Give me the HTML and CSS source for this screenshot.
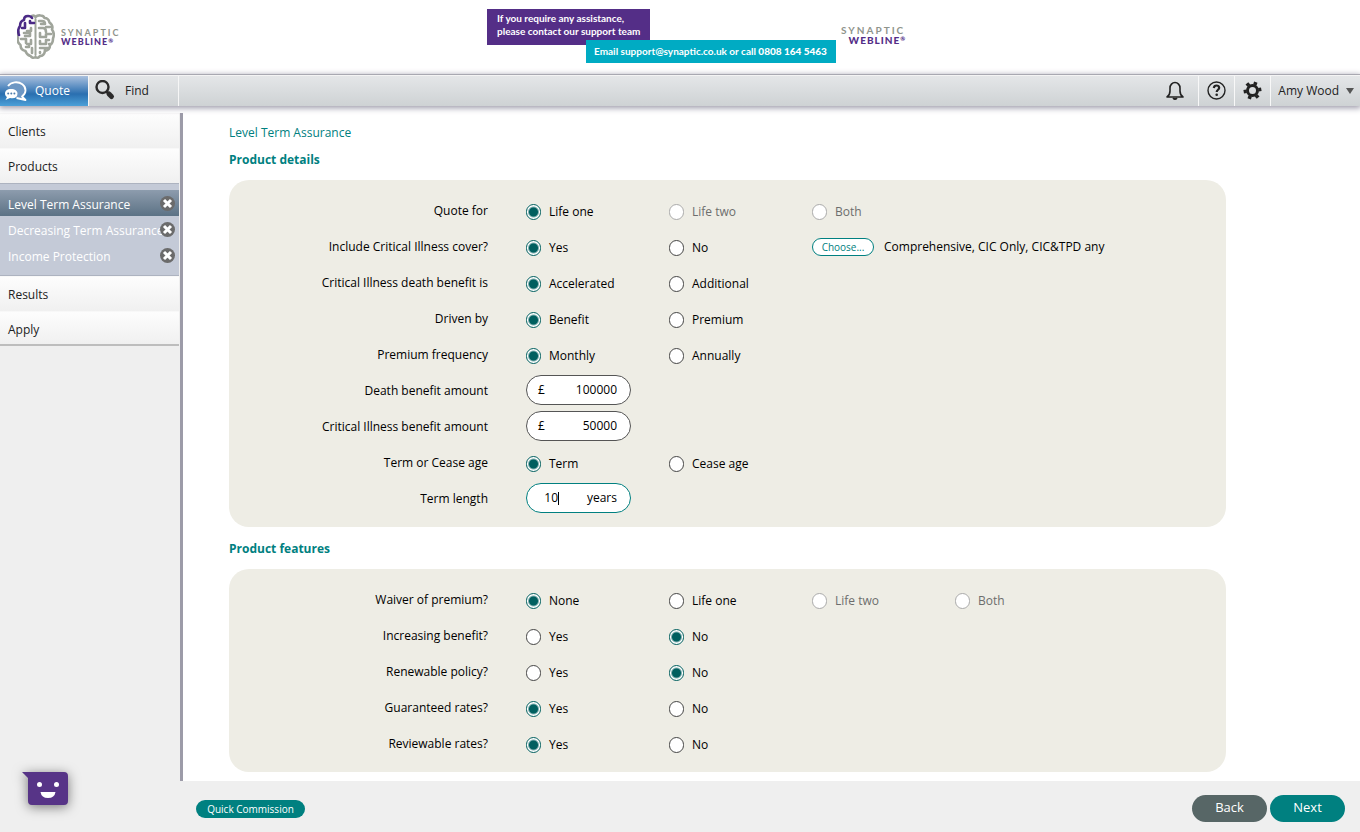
FILE: index.html
```html
<!DOCTYPE html>
<html lang="en">

<head>
    <meta charset="UTF-8">
    <meta name="viewport" content="width=device-width, initial-scale=1.0">
    <title>Synaptic Webline - Level Term Assurance</title>
    <link rel="stylesheet" href="styles.css">
</head>

<body>
    <header class="header">
        <a class="logo" href="#">
            <svg class="brain" width="38" height="46" viewBox="0 0 38 46" fill="none" stroke="#a0a59b" stroke-width="2.600" stroke-linecap="round" stroke-linejoin="round">
                <path d="M18.500 5v36" stroke-width="2" />
                <path d="M15 2q2-1 3.500 1q2-2 5-1.500q3 0 4 2.500q4 0 5 4.500q4 3 2.500 7q3 4 1 9q0 5-3 6.500q0 5-5 6q-1 5-5 5q-2 3-4.500 1q-3 2-5-1q-4-1-5-5q-5-1-5-6q-4-3-2.500-7q-2-3 .5-6" />
                <path d="M22 7h3q3 0 3 3h-4M22 14h4q3 0 3 4M33 13h-4M34 20h-5v3h-6v-4M32 26h-3v4h-6v-3M23 34h5v3M23 39v-1M29 34h2" />
                <path d="M14 14v3h-4M7 19h6v3h-5M4 25h5v4M14 26v4h-4M9 33h3v-1M15 34v5M33 30h-1" />
                <path stroke="#4b2a86" d="M17 9h-4v-2M15 4q-1-2-4-2q-4 0-4 4q-4 1-4 6q-3 4-1 9M8 9v5h-3" />
            </svg>
            <span class="logoText"><span>SYNAPTIC</span><strong>WEBLINE<small>®</small></strong></span>
        </a>
        <div class="support">
            <p class="supportTitle">If you require any assistance,<br>please contact our support team</p>
            <p class="supportContact">Email support@synaptic.co.uk or call <b>0808 164 5463</b></p>
        </div>
        <span class="logoText logoTextRight"><span>SYNAPTIC</span><strong>WEBLINE<small>®</small></strong></span>
    </header>

    <nav class="navBar">
        <a class="tab tabActive" href="#">
            <svg width="24" height="22" viewBox="0 0 24 22">
                <path d="M4 6a9.500 8 0 1 1 14 10.500l3.500 3.500-9-2" fill="#6d97c4" stroke="#fff" stroke-width="1.800" stroke-linejoin="round" />
                <path d="M7 9c-4 0-6 2-6 4.500 0 2 1 3 2 3.500l-1.500 3 4.500-2c5 1 7.500-1 7.500-4.500C13.500 11 11 9 7 9z" fill="#fff" />
                <g fill="#4d7cac"><circle cx="4.200" cy="13.500" r="1" /><circle cx="7.300" cy="13.500" r="1" /><circle cx="10.400" cy="13.500" r="1" /></g>
            </svg>
            Quote
        </a>
        <a class="tab tabFind" href="#">
            <svg width="22" height="22" viewBox="0 0 22 22" fill="none" stroke="#2b2b2b">
                <circle cx="7.500" cy="7" r="6" stroke-width="2.400" />
                <path d="M11.500 11.500l2 2" stroke-width="2.500" />
                <path d="M14 14l2.500 2.500" stroke-width="5" stroke-linecap="round" />
            </svg>
            Find
        </a>
        <div class="navTools">
            <button class="tool toolBell" type="button" aria-label="Notifications">
                <svg width="20" height="20" viewBox="0 0 20 20" fill="none" stroke="#222" stroke-width="1.600" stroke-linejoin="round">
                    <path d="M2 16q3-2 3-6V7a5 5.500 0 0 1 10 0v3q0 4 3 6z" />
                    <path d="M8 17q2 2.500 4 0" fill="#222" />
                </svg>
            </button>
            <button class="tool" type="button" aria-label="Help">
                <svg width="20" height="20" viewBox="0 0 20 20" fill="none" stroke="#222">
                    <circle cx="9.500" cy="9.500" r="8.500" stroke-width="1.400" />
                    <path d="M6.800 7q.3-2.500 2.700-2.500t2.700 2.300c0 2-2.500 2-2.500 4.300" stroke-width="2.200" />
                    <circle cx="9.700" cy="13.800" r="1.300" fill="#222" stroke="none" />
                </svg>
            </button>
            <button class="tool" type="button" aria-label="Settings">
                <svg width="20" height="20" viewBox="0 0 20 20" fill="none" stroke="#222">
                    <circle cx="9.500" cy="9.500" r="5" stroke-width="3" />
                    <path d="M11.800 4l1-2.800M15.400 8.700l2.900-.5M13.100 14.300l2 2.400M7.200 15l-1 2.800M3.600 10.300l-2.900.5M5.900 4.700L3.900 2.300" stroke-width="3.600" />
                </svg>
            </button>
            <button class="userMenu" type="button">Amy Wood <span class="arrow"></span></button>
        </div>
    </nav>

    <div class="content">
        <aside class="sidebar">
            <a class="sideItem" href="#">Clients</a>
            <a class="sideItem" href="#">Products</a>
            <ul class="productList">
                <li class="product productActive"><a href="#">Level Term Assurance</a>
                    <button class="remove" type="button" aria-label="Remove Level Term Assurance"><svg width="15" height="15" viewBox="0 0 15 15"><circle cx="7.500" cy="7.500" r="7.500" /><path d="M4 4l7 7M11 4l-7 7" /></svg></button>
                </li>
                <li class="product"><a href="#">Decreasing Term Assurance</a>
                    <button class="remove" type="button" aria-label="Remove Decreasing Term Assurance"><svg width="15" height="15" viewBox="0 0 15 15"><circle cx="7.500" cy="7.500" r="7.500" /><path d="M4 4l7 7M11 4l-7 7" /></svg></button>
                </li>
                <li class="product"><a href="#">Income Protection</a>
                    <button class="remove" type="button" aria-label="Remove Income Protection"><svg width="15" height="15" viewBox="0 0 15 15"><circle cx="7.500" cy="7.500" r="7.500" /><path d="M4 4l7 7M11 4l-7 7" /></svg></button>
                </li>
            </ul>
            <a class="sideItem" href="#">Results</a>
            <a class="sideItem sideItemLast" href="#">Apply</a>
        </aside>

        <main class="main">
            <h1 class="pageTitle">Level Term Assurance</h1>

            <h2 class="sectionTitle">Product details</h2>
            <section class="panel">
                <div class="row" role="radiogroup" aria-labelledby="quoteFor">
                    <span class="rowLabel" id="quoteFor">Quote for</span>
                    <label class="option"><input type="radio" name="quoteFor" checked>Life one</label>
                    <label class="option disabled"><input type="radio" name="quoteFor" disabled>Life two</label>
                    <label class="option disabled"><input type="radio" name="quoteFor" disabled>Both</label>
                </div>
                <div class="row" role="radiogroup" aria-labelledby="ciCover">
                    <span class="rowLabel" id="ciCover">Include Critical Illness cover?</span>
                    <label class="option"><input type="radio" name="ciCover" checked>Yes</label>
                    <label class="option"><input type="radio" name="ciCover">No</label>
                    <div class="chooseCell">
                        <button class="choose" type="button">Choose...</button>
                        <span>Comprehensive, CIC Only, CIC&amp;TPD any</span>
                    </div>
                </div>
                <div class="row" role="radiogroup" aria-labelledby="ciDeath">
                    <span class="rowLabel" id="ciDeath">Critical Illness death benefit is</span>
                    <label class="option"><input type="radio" name="ciDeath" checked>Accelerated</label>
                    <label class="option"><input type="radio" name="ciDeath">Additional</label>
                </div>
                <div class="row" role="radiogroup" aria-labelledby="drivenBy">
                    <span class="rowLabel" id="drivenBy">Driven by</span>
                    <label class="option"><input type="radio" name="drivenBy" checked>Benefit</label>
                    <label class="option"><input type="radio" name="drivenBy">Premium</label>
                </div>
                <div class="row" role="radiogroup" aria-labelledby="frequency">
                    <span class="rowLabel" id="frequency">Premium frequency</span>
                    <label class="option"><input type="radio" name="frequency" checked>Monthly</label>
                    <label class="option"><input type="radio" name="frequency">Annually</label>
                </div>
                <div class="row">
                    <label class="rowLabel" for="deathAmount">Death benefit amount</label>
                    <div class="field"><span>£</span><input type="text" id="deathAmount" value="100000"></div>
                </div>
                <div class="row">
                    <label class="rowLabel" for="ciAmount">Critical Illness benefit amount</label>
                    <div class="field"><span>£</span><input type="text" id="ciAmount" value="50000"></div>
                </div>
                <div class="row" role="radiogroup" aria-labelledby="termOrAge">
                    <span class="rowLabel" id="termOrAge">Term or Cease age</span>
                    <label class="option"><input type="radio" name="termOrAge" checked>Term</label>
                    <label class="option"><input type="radio" name="termOrAge">Cease age</label>
                </div>
                <div class="row">
                    <label class="rowLabel" for="termLength">Term length</label>
                    <div class="field fieldTerm"><input type="text" id="termLength" value="10"><i class="caret"></i><span>years</span></div>
                </div>
            </section>

            <h2 class="sectionTitle">Product features</h2>
            <section class="panel">
                <div class="row" role="radiogroup" aria-labelledby="waiver">
                    <span class="rowLabel" id="waiver">Waiver of premium?</span>
                    <label class="option"><input type="radio" name="waiver" checked>None</label>
                    <label class="option"><input type="radio" name="waiver">Life one</label>
                    <label class="option disabled"><input type="radio" name="waiver" disabled>Life two</label>
                    <label class="option disabled"><input type="radio" name="waiver" disabled>Both</label>
                </div>
                <div class="row" role="radiogroup" aria-labelledby="increasing">
                    <span class="rowLabel" id="increasing">Increasing benefit?</span>
                    <label class="option"><input type="radio" name="increasing">Yes</label>
                    <label class="option"><input type="radio" name="increasing" checked>No</label>
                </div>
                <div class="row" role="radiogroup" aria-labelledby="renewable">
                    <span class="rowLabel" id="renewable">Renewable policy?</span>
                    <label class="option"><input type="radio" name="renewable">Yes</label>
                    <label class="option"><input type="radio" name="renewable" checked>No</label>
                </div>
                <div class="row" role="radiogroup" aria-labelledby="guaranteed">
                    <span class="rowLabel" id="guaranteed">Guaranteed rates?</span>
                    <label class="option"><input type="radio" name="guaranteed" checked>Yes</label>
                    <label class="option"><input type="radio" name="guaranteed">No</label>
                </div>
                <div class="row" role="radiogroup" aria-labelledby="reviewable">
                    <span class="rowLabel" id="reviewable">Reviewable rates?</span>
                    <label class="option"><input type="radio" name="reviewable" checked>Yes</label>
                    <label class="option"><input type="radio" name="reviewable">No</label>
                </div>
            </section>
        </main>
    </div>

    <footer class="footer">
        <button class="quick" type="button">Quick Commission</button>
        <div class="footerActions">
            <button class="action actionBack" type="button">Back</button>
            <button class="action" type="button">Next</button>
        </div>
    </footer>

    <button class="chat" type="button" aria-label="Chat">
        <svg width="46" height="34" viewBox="0 0 46 34">
            <path d="M0 0h42a4 4 0 0 1 4 4v25a4 4 0 0 1-4 4H10a4 4 0 0 1-4-4V6z" fill="#573487" />
            <circle cx="17.500" cy="12.500" r="2.500" fill="#fff" />
            <circle cx="34.500" cy="12.500" r="2.500" fill="#fff" />
            <path d="M18.500 20h15q-1 6-7.500 6t-7.500-6z" fill="#fff" />
        </svg>
    </button>
</body>

</html>
```
FILE: styles.css
```css
:root {
    --teal: #008080;
    --tealDark: #005f5f;
    --purple: #542e87;
    --grey: #efefef;
    --panel: #eeede5;
}

* {
    box-sizing: border-box;
}

body {
    margin: 0;
    min-height: 100vh;
    display: flex;
    flex-direction: column;
    background: var(--grey);
    color: #000;
    font-family: "Open Sans", "Noto Sans", sans-serif;
    font-size: 12px;
    line-height: 18px;
}

a {
    color: inherit;
    text-decoration: none;
}

button,
input {
    font: inherit;
    margin: 0;
}

button {
    padding: 0;
    border: none;
    background: none;
    cursor: pointer;
}

svg {
    display: block;
    flex: none;
}

/* header */

.header {
    height: 75px;
    display: grid;
    grid-template-columns: 487px 349px 1fr;
    background: #fff;
    border-bottom: 1px solid #b4b4b8;
}

.logo {
    display: flex;
    align-items: flex-start;
    gap: 6px;
    padding: 14px 0 0 17px;
}

.logoText {
    display: flex;
    flex-direction: column;
    padding-top: 14px;
    color: #8f948c;
    font-family: Lato, sans-serif;
    font-size: 9px;
    font-weight: 700;
    line-height: 9px;
    letter-spacing: 2px;
}

.logoText strong {
    display: flex;
    color: var(--purple);
    font-weight: 900;
    letter-spacing: 1px;
}

.logoText small {
    font-size: 6px;
    line-height: 7px;
    letter-spacing: 0;
}

.logoTextRight {
    align-items: flex-end;
    justify-self: start;
    padding: 25px 0 0 5px;
    font-size: 10px;
    line-height: 10px;
}

.support {
    display: flex;
    flex-direction: column;
    padding-top: 9px;
    color: #fff;
    font-family: Lato, sans-serif;
    font-size: 10px;
    font-weight: 700;
}

.support p {
    margin: 0;
}

.supportTitle {
    width: 163px;
    height: 36px;
    padding: 3px 10px;
    background: var(--purple);
    line-height: 13px;
    white-space: nowrap;
}

.support .supportContact {
    align-self: flex-end;
    width: 250px;
    height: 23px;
    margin-top: -5px;
    padding-left: 8px;
    background: #00abc3;
    line-height: 22px;
    white-space: nowrap;
}

.supportContact b {
    font-weight: 900;
}

/* navigation */

.navBar {
    position: relative;
    display: flex;
    height: 31px;
    background: linear-gradient(#e4e6e8, #ced2d4);
    box-shadow: 0 1px 6px 1px #9a98a8;
    border-top: 1px solid #f4f4f4;
    color: #222;
}

.tab {
    display: flex;
    align-items: center;
    border-right: 1px solid #f6f6f6;
}

.tabActive {
    width: 89px;
    gap: 7px;
    padding-left: 4px;
    background: linear-gradient(#a9c0de, #2a6fb0 60%, #4ba0d8);
    color: #fff;
}

.tabFind {
    width: 90px;
    gap: 8px;
    padding-left: 6px;
}

.navTools {
    display: flex;
    margin-left: auto;
}

.tool {
    display: flex;
    align-items: center;
    justify-content: center;
    width: 36px;
    border-right: 1px solid #f8f8f8;
}

.toolBell {
    width: 48px;
}

.userMenu {
    display: flex;
    align-items: center;
    gap: 7px;
    padding: 0 6px 0 7px;
    color: #222;
}

.arrow {
    border: 4px solid transparent;
    border-top: 6px solid #555;
    border-bottom: none;
}

/* sidebar */

.content {
    display: flex;
    flex: 1;
    background: #fff;
}

.sidebar {
    flex: none;
    width: 183px;
    margin-top: 7px;
    padding-right: 1px;
    border-right: 3px solid #9c9ba8;
    background: var(--grey);
    color: #222;
}

.sideItem {
    display: block;
    height: 35px;
    padding: 9px 8px 7px;
    background: linear-gradient(#fdfdfd, #f0f0f0);
    border-top: 1px solid #f8f8f8;
}

.sideItemLast {
    border-bottom: 2px solid #bdbdbd;
}

.productList {
    margin: 0;
    padding: 6px 0 7px;
    list-style: none;
    background: #c4cad7;
    border-top: 1px solid #adb3c0;
    border-bottom: 1px solid #adb3c0;
}

.product {
    display: flex;
    align-items: center;
    height: 26px;
    padding: 0 4px 0 8px;
    color: #fff;
    white-space: nowrap;
}

.product a {
    flex: 1;
    min-width: 0;
    padding-top: 4px;
}

.productActive {
    background: linear-gradient(#8d9cad, #5c7285);
}

.remove circle {
    fill: #6b6b6b;
}

.remove path {
    stroke: #fff;
    stroke-width: 3;
}

/* form */

.main {
    flex: 1;
    padding: 17px 134px 9px 46px;
}

.pageTitle,
.sectionTitle {
    margin: 0;
    color: var(--teal);
    font-size: 12px;
    line-height: 20px;
}

.pageTitle {
    margin-bottom: 7px;
    font-weight: 400;
}

.sectionTitle {
    margin-bottom: 10px;
    font-weight: 700;
}

.panel {
    margin-bottom: 12px;
    padding: 14px 0 9px;
    background: var(--panel);
    border-radius: 20px;
}

.panel:last-child {
    margin-bottom: 0;
}

.row {
    display: grid;
    grid-template-columns: 297px repeat(4, 143px);
    align-items: center;
    height: 36px;
}

.rowLabel {
    padding: 0 38px 2px 0;
    text-align: right;
}

.option {
    display: flex;
    align-items: center;
    gap: 8px;
}

.option input {
    appearance: none;
    width: 15px;
    height: 16px;
    border: 1px solid #444;
    border-radius: 8px;
    background: #fff;
}

.option input:checked {
    border-color: var(--tealDark);
    background: radial-gradient(circle, var(--tealDark) 4px, #fff 6px);
}

.option input:disabled {
    border-color: #aaa;
}

.disabled {
    color: #6d6d6d;
}

.chooseCell {
    grid-column: span 2;
    display: flex;
    align-items: center;
    gap: 10px;
    padding-bottom: 2px;
    white-space: nowrap;
}

.choose {
    flex: none;
    width: 62px;
    height: 18px;
    border: 1px solid var(--teal);
    border-radius: 9px;
    background: #fff;
    color: var(--teal);
    font-size: 10px;
    line-height: 16px;
}

.field {
    display: flex;
    align-items: center;
    width: 105px;
    height: 30px;
    margin-bottom: 4px;
    padding: 0 13px 0 11px;
    border: 1px solid #555;
    border-radius: 15px;
    background: #fff;
}

.field input {
    flex: 1;
    min-width: 0;
    padding: 0;
    border: none;
    outline: none;
    background: none;
    text-align: right;
}

.fieldTerm {
    padding-left: 17px;
    border-color: var(--teal);
}

.fieldTerm input {
    flex: none;
    width: 14px;
    caret-color: transparent;
}

.fieldTerm span {
    margin-left: auto;
}

.caret {
    width: 1px;
    height: 13px;
    background: #000;
}

/* footer */

.footer {
    display: flex;
    align-items: center;
    justify-content: space-between;
    height: 51px;
    padding: 4px 15px 0 196px;
}

.quick,
.action {
    background: var(--teal);
    color: #fff;
}

.quick {
    width: 109px;
    height: 18px;
    border-radius: 9px;
    font-size: 10px;
    line-height: 18px;
}

.footerActions {
    display: flex;
    gap: 3px;
}

.action {
    width: 75px;
    height: 27px;
    padding-bottom: 3px;
    border-radius: 14px;
    font-size: 13px;
}

.actionBack {
    background: #576666;
}

.chat {
    position: fixed;
    left: 22px;
    bottom: 26px;
    filter: drop-shadow(0 2px 6px rgba(0, 0, 0, 0.5));
}
```
